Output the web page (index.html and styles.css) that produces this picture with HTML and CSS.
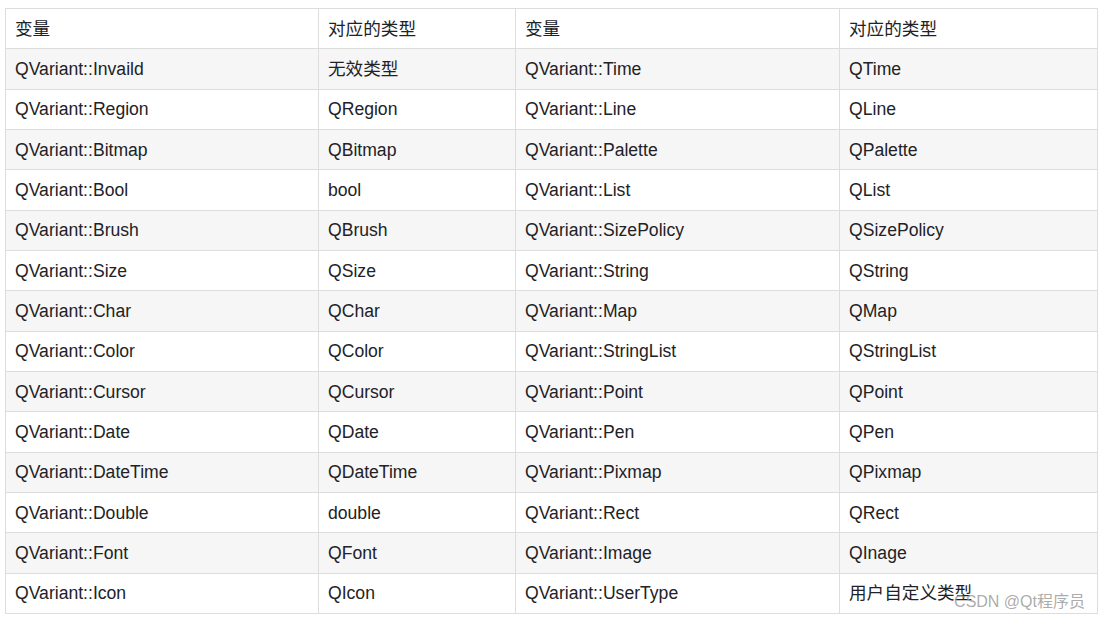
FILE: index.html
```html
<!DOCTYPE html>
<html lang="zh">
<head>
<meta charset="utf-8">
<link rel="stylesheet" href="styles.css">
</head>
<body>
<div class="page">
  <p class="cut">QVariant::Type 对应的类型</p>
  <div class="table-wrap">
    <table class="vt">
      <colgroup>
        <col class="c1"><col class="c2"><col class="c3"><col class="c4">
      </colgroup>
      <thead>
        <tr><th>变量</th><th>对应的类型</th><th>变量</th><th>对应的类型</th></tr>
      </thead>
      <tbody>
        <tr><td>QVariant::Invaild</td><td>无效类型</td><td>QVariant::Time</td><td>QTime</td></tr>
        <tr><td>QVariant::Region</td><td>QRegion</td><td>QVariant::Line</td><td>QLine</td></tr>
        <tr><td>QVariant::Bitmap</td><td>QBitmap</td><td>QVariant::Palette</td><td>QPalette</td></tr>
        <tr><td>QVariant::Bool</td><td>bool</td><td>QVariant::List</td><td>QList</td></tr>
        <tr><td>QVariant::Brush</td><td>QBrush</td><td>QVariant::SizePolicy</td><td>QSizePolicy</td></tr>
        <tr><td>QVariant::Size</td><td>QSize</td><td>QVariant::String</td><td>QString</td></tr>
        <tr><td>QVariant::Char</td><td>QChar</td><td>QVariant::Map</td><td>QMap</td></tr>
        <tr><td>QVariant::Color</td><td>QColor</td><td>QVariant::StringList</td><td>QStringList</td></tr>
        <tr><td>QVariant::Cursor</td><td>QCursor</td><td>QVariant::Point</td><td>QPoint</td></tr>
        <tr><td>QVariant::Date</td><td>QDate</td><td>QVariant::Pen</td><td>QPen</td></tr>
        <tr><td>QVariant::DateTime</td><td>QDateTime</td><td>QVariant::Pixmap</td><td>QPixmap</td></tr>
        <tr><td>QVariant::Double</td><td>double</td><td>QVariant::Rect</td><td>QRect</td></tr>
        <tr><td>QVariant::Font</td><td>QFont</td><td>QVariant::Image</td><td>QInage</td></tr>
        <tr><td>QVariant::Icon</td><td>QIcon</td><td>QVariant::UserType</td><td>用户自定义类型</td></tr>
      </tbody>
    </table>
    <span class="watermark">CSDN @Qt程序员</span>
  </div>
</div>
</body>
</html>
```

FILE: styles.css
```css
html, body {
  margin: 0;
  padding: 0;
  background: #fff;
}
body {
  font-family: "Liberation Sans", Arial, "Noto Sans CJK SC", sans-serif;
  color: #222226;
  font-size: 17.6px;
}
.page {
  padding: 0 0 0 5px;
  width: 1092px;
}
.cut {
  margin: -21px 0 0 0;
  height: 29px;
  line-height: 22px;
  padding-left: 40px;
  font-size: 17.6px;
  font-weight: bold;
  color: #222;
  white-space: nowrap;
}
.table-wrap {
  position: relative;
}
.vt {
  border-collapse: collapse;
  width: 1092px;
  table-layout: fixed;
}
.c1 { width: 313px; }
.c2 { width: 197px; }
.c3 { width: 324px; }
.c4 { width: 258px; }
.vt th, .vt td {
  border: 1px solid #dddddd;
  height: 40.33px;
  padding: 0 9px;
  box-sizing: border-box;
  text-align: left;
  font-weight: normal;
  vertical-align: middle;
  line-height: 22px;
  white-space: nowrap;
}
.vt thead tr { background: #fff; }
.vt tbody tr:nth-child(odd) { background: #f6f6f6; }
.vt tbody tr:nth-child(even) { background: #fff; }
.watermark {
  position: absolute;
  right: 12px;
  bottom: 2px;
  font-size: 16px;
  color: rgba(150, 150, 150, 0.8);
  white-space: nowrap;
}
```
